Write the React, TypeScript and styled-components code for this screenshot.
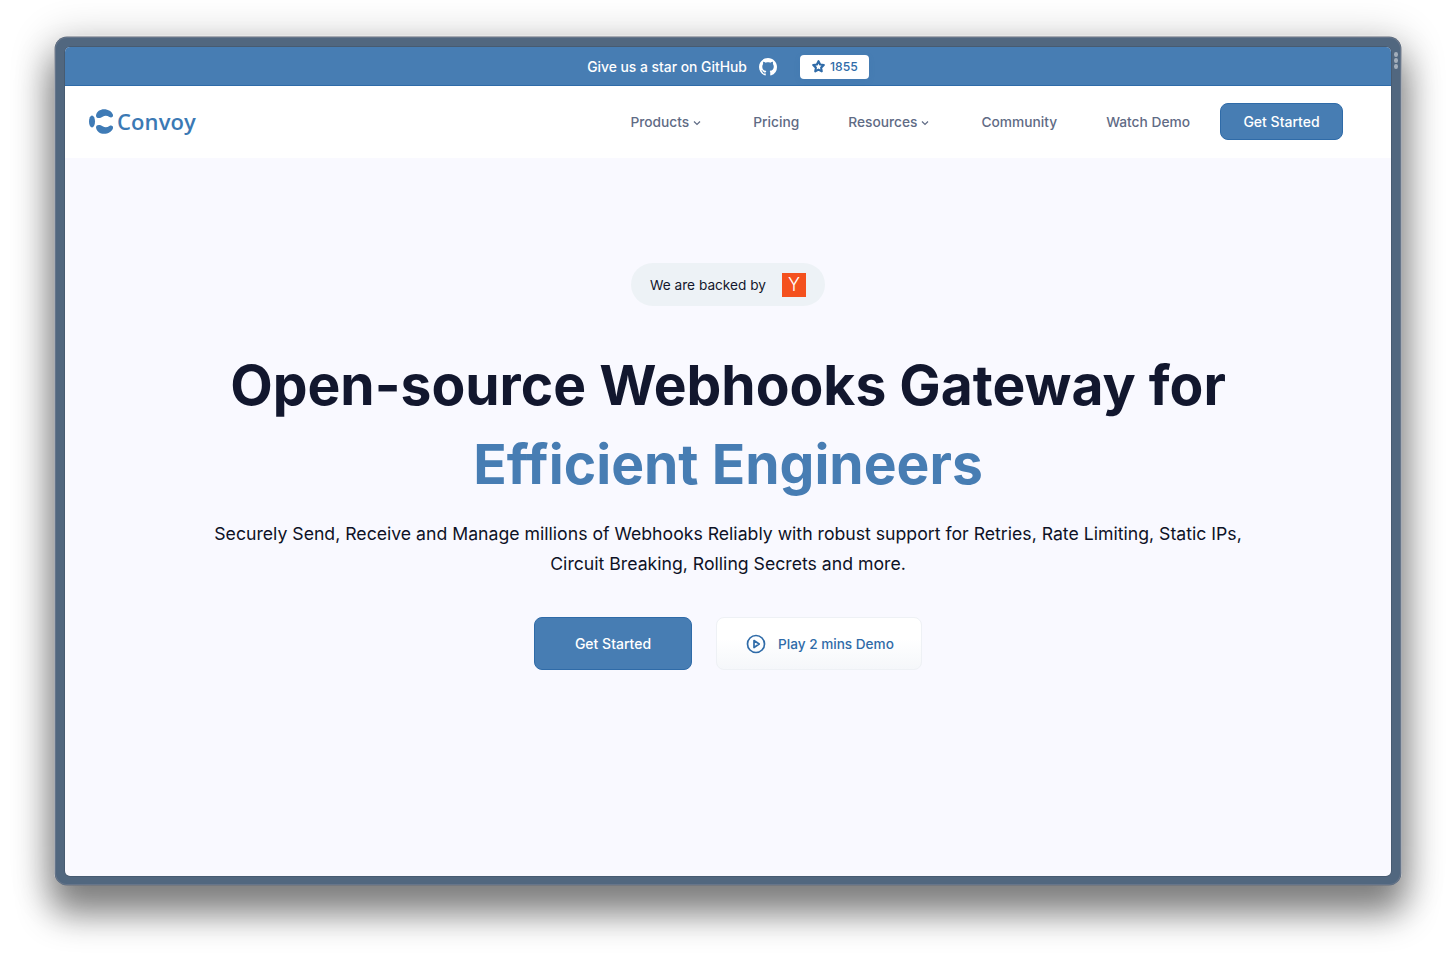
import React from "react";
import styled, { createGlobalStyle } from "styled-components";

const Global = createGlobalStyle`
  html, body { margin: 0; padding: 0; background: #fff; }
  body { font-family: Inter, "Liberation Sans", sans-serif; height: 958px; overflow: hidden; }
  * { box-sizing: border-box; }
`;

const Stage = styled.div`
  padding: 37px 55px 0;
`;

const Frame = styled.div`
  position: relative;
  width: 1346px;
  height: 848px;
  padding: 10px 10px 9px;
  background: #51677f;
  border-radius: 12px;
  box-shadow: inset 0 0 0 1px #66758a, 0 0 0 0.5px #666f7c, 0 -1px 0 1px #e8e8e8, 0 26px 34px 4px rgba(0, 0, 0, 0.42), 0 6px 40px 6px rgba(0, 0, 0, 0.2);
`;

const Grip = styled.div`
  position: absolute;
  top: 15px;
  right: 3px;
  display: flex;
  flex-direction: column;
  gap: 1.5px;
`;

const GripDot = styled.span`
  width: 4px;
  height: 4.5px;
  border-radius: 50%;
  background: #a3aebb;
`;

const Screen = styled.div`
  height: 829px;
  border-radius: 5px;
  background: #f9f9ff;
  overflow: hidden;
  box-shadow: 0 0 0 0.5px #3f5064;
`;

const TopBar = styled.div`
  height: 39px;
  padding-top: 1px;
  background: #477db3;
  border-bottom: 1px solid #2f6ba8;
  display: flex;
  align-items: center;
  justify-content: center;
  color: #fff;
`;

const TopText = styled.span`
  font-size: 13.85px;
  font-weight: 500;
  white-space: nowrap;
`;

const GitHubMark = styled.svg`
  width: 18px;
  height: 18px;
  margin-left: 12px;
  fill: #fff;
`;

const StarChip = styled.div`
  margin-left: 23px;
  width: 69px;
  height: 24px;
  border-radius: 4px;
  background: #fff;
  display: flex;
  align-items: center;
  justify-content: center;
  gap: 4px;
  color: #2f6ba8;
  font-size: 12.2px;
  font-weight: 500;
  box-shadow: 0 2px 6px rgba(47, 107, 168, 0.12);
`;

const Nav = styled.nav`
  height: 72px;
  background: #fff;
  display: flex;
  align-items: center;
  padding: 0 48px 2px 24px;
`;

const Brand = styled.div`
  display: flex;
  align-items: center;
  gap: 3px;
  margin-right: auto;
`;

const BrandName = styled.span`
  font-family: "Open Sans", sans-serif;
  font-size: 22px;
  font-weight: 600;
  color: #3b79b4;
  line-height: 1;
  letter-spacing: 0.1px;
`;

const NavLinks = styled.div`
  display: flex;
  align-items: center;
  gap: 49px;
  padding-top: 2px;
`;

const NavLink = styled.a<{ $caret?: boolean }>`
  display: flex;
  align-items: center;
  gap: 4px;
  font-size: 13.75px;
  font-weight: 500;
  color: #5f6b85;
  white-space: nowrap;
  padding-right: ${(p) => (p.$caret ? "3px" : "0")};
`;

const Caret = styled.svg`
  width: 8px;
  height: 6px;
  margin-top: 1px;
  fill: none;
  stroke: #5f6b85;
  stroke-width: 1.2;
`;

const NavButton = styled.button`
  margin-left: 30px;
  width: 123px;
  height: 37px;
  border-radius: 8px;
  border: 1px solid #2f6ba8;
  background: #477db3;
  color: #fff;
  font: 500 14px Inter, sans-serif;
`;

const Hero = styled.main`
  display: flex;
  flex-direction: column;
  align-items: center;
  padding-top: 105px;
`;

const Backed = styled.div`
  width: 194px;
  height: 43px;
  border-radius: 22px;
  background: #edf2f6;
  display: flex;
  align-items: center;
  padding-left: 19px;
  gap: 16px;
  font-size: 13.65px;
  color: #13172c;
`;

const YBadge = styled.span`
  width: 24px;
  height: 24px;
  background: #f4511e;
  color: #fff;
  font-size: 18px;
  font-weight: 300;
  display: flex;
  align-items: center;
  justify-content: center;
`;

const Title = styled.h1`
  margin: 40px 0 0;
  font-size: 55.2px;
  line-height: 79px;
  font-weight: 700;
  color: #12172e;
  text-align: center;
  white-space: nowrap;
`;

const Accent = styled.span`
  display: block;
  color: #477db3;
`;

const Lead = styled.p`
  margin: 15px 0 0;
  font-size: 17.66px;
  line-height: 30px;
  color: #0e1226;
  text-align: center;
  white-space: nowrap;
`;

const Actions = styled.div`
  display: flex;
  gap: 24px;
  margin-top: 38px;
`;

const PrimaryCta = styled.button`
  width: 158px;
  height: 53px;
  border-radius: 8px;
  border: 1px solid #2f6ba8;
  background: #477db3;
  color: #fff;
  font: 500 14px Inter, sans-serif;
`;

const DemoCta = styled.button`
  width: 206px;
  height: 53px;
  padding: 0 0 0 2px;
  border-radius: 8px;
  border: 1px solid #eef1f5;
  background: linear-gradient(180deg, #ffffff 40%, #f5f7fa 100%);
  color: #2f6ba8;
  font: 500 13.6px Inter, sans-serif;
  display: flex;
  align-items: center;
  justify-content: center;
  gap: 12px;
`;

export default function App() {
  return (
    <>
      <Global />
      <Stage>
        <Frame>
          <Grip>
            <GripDot />
            <GripDot />
            <GripDot />
          </Grip>
          <Screen>
            <TopBar>
              <TopText>Give us a star on GitHub</TopText>
              <GitHubMark viewBox="0 0 16 16">
                <path d="M8 0C3.58 0 0 3.58 0 8c0 3.54 2.29 6.53 5.47 7.59.4.07.55-.17.55-.38 0-.19-.01-.82-.01-1.49-2.01.37-2.53-.49-2.69-.94-.09-.23-.48-.94-.82-1.13-.28-.15-.68-.52-.01-.53.63-.01 1.08.58 1.23.82.72 1.21 1.87.87 2.33.66.07-.52.28-.87.51-1.07-1.78-.2-3.64-.89-3.64-3.95 0-.87.31-1.59.82-2.15-.08-.2-.36-1.02.08-2.12 0 0 .67-.21 2.2.82.64-.18 1.32-.27 2-.27s1.36.09 2 .27c1.53-1.04 2.2-.82 2.2-.82.44 1.1.16 1.92.08 2.12.51.56.82 1.27.82 2.15 0 3.07-1.87 3.75-3.65 3.95.29.25.54.73.54 1.48 0 1.07-.01 1.93-.01 2.2 0 .21.15.46.55.38A8.01 8.01 0 0 0 16 8c0-4.42-3.58-8-8-8z" />
              </GitHubMark>
              <StarChip>
                <svg width="15" height="15" viewBox="0 0 24 24" fill="none" stroke="#2f6ba8" strokeWidth="3.4" strokeLinejoin="round">
                  <path d="M12 3.5l2.6 5.4 5.9.8-4.3 4.1 1 5.9L12 16.9l-5.2 2.8 1-5.9-4.3-4.1 5.9-.8z" />
                </svg>
                1855
              </StarChip>
            </TopBar>
            <Nav>
              <Brand>
                <svg width="25" height="25" viewBox="0 0 25 25" fill="#3f7bb6">
                  <ellipse cx="3" cy="12.5" rx="3" ry="6" />
                  <path d="M7 6.5C7.6 2.4 11.2.2 15 .2c4.2 0 7.9 2.2 9 5.6.6 2.2-1.8 3.4-3.6 2.2-2.2-1.5-4.6-1.6-6.8-.2C11 9.6 7 9.8 7 6.5z" />
                  <path d="M7 18.5c.6 4.1 4.2 6.3 8 6.3 4.2 0 7.9-2.2 9-5.6.6-2.2-1.8-3.4-3.6-2.2-2.2 1.5-4.6 1.6-6.8.2C11 15.4 7 15.2 7 18.5z" />
                </svg>
                <BrandName>Convoy</BrandName>
              </Brand>
              <NavLinks>
                <NavLink $caret>
                  Products
                  <Caret viewBox="0 0 8 6"><path d="M1 1.5l3 3 3-3" /></Caret>
                </NavLink>
                <NavLink>Pricing</NavLink>
                <NavLink $caret>
                  Resources
                  <Caret viewBox="0 0 8 6"><path d="M1 1.5l3 3 3-3" /></Caret>
                </NavLink>
                <NavLink>Community</NavLink>
                <NavLink>Watch Demo</NavLink>
              </NavLinks>
              <NavButton>Get Started</NavButton>
            </Nav>
            <Hero>
              <Backed>
                We are backed by
                <YBadge>Y</YBadge>
              </Backed>
              <Title>
                Open-source Webhooks Gateway for
                <Accent>Efficient Engineers</Accent>
              </Title>
              <Lead>
                Securely Send, Receive and Manage millions of Webhooks Reliably with robust support for Retries, Rate Limiting, Static IPs,
                <br />
                Circuit Breaking, Rolling Secrets and more.
              </Lead>
              <Actions>
                <PrimaryCta>Get Started</PrimaryCta>
                <DemoCta>
                  <svg width="20" height="20" viewBox="0 0 20 20" fill="none" stroke="#2f6ba8" strokeWidth="1.7" strokeLinejoin="round">
                    <circle cx="10" cy="10" r="8.5" />
                    <path d="M8 6.5l5.2 3.5L8 13.5z" />
                  </svg>
                  Play 2 mins Demo
                </DemoCta>
              </Actions>
            </Hero>
          </Screen>
        </Frame>
      </Stage>
    </>
  );
}
